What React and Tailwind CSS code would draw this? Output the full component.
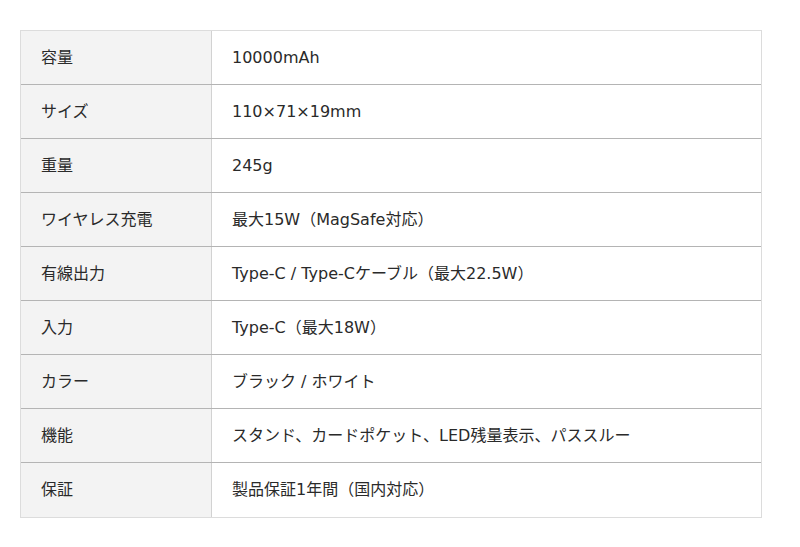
const specs = [
  { label: "容量", value: "10000mAh" },
  { label: "サイズ", value: "110×71×19mm" },
  { label: "重量", value: "245g" },
  { label: "ワイヤレス充電", value: "最大15W（MagSafe対応）" },
  { label: "有線出力", value: "Type-C / Type-Cケーブル（最大22.5W）" },
  { label: "入力", value: "Type-C（最大18W）" },
  { label: "カラー", value: "ブラック / ホワイト" },
  { label: "機能", value: "スタンド、カードポケット、LED残量表示、パススルー" },
  { label: "保証", value: "製品保証1年間（国内対応）" },
];

const App = () => {
  return (
    <div className="min-h-[547px] w-[800px] bg-white pt-[30px] pl-[20px] font-['DejaVu_Sans','Noto_Sans_CJK_JP',sans-serif] text-[16px] text-[#2a2a2a]">
      {/* Spec table */}
      <div className="w-[742px] border border-[#dcdcdc]">
        {specs.map((row, i) => (
          <div
            key={row.label}
            className={`flex h-[54px] ${i < specs.length - 1 ? "border-b border-[#b4b4b4]" : "h-[53px]"}`}
          >
            <div className="flex w-[191px] shrink-0 items-center border-r border-[#d2d2d2] bg-[#f3f3f3] pl-[20px]">
              {row.label}
            </div>
            <div className="flex flex-1 items-center pl-[20px]">{row.value}</div>
          </div>
        ))}
      </div>
    </div>
  );
};

export default App;
